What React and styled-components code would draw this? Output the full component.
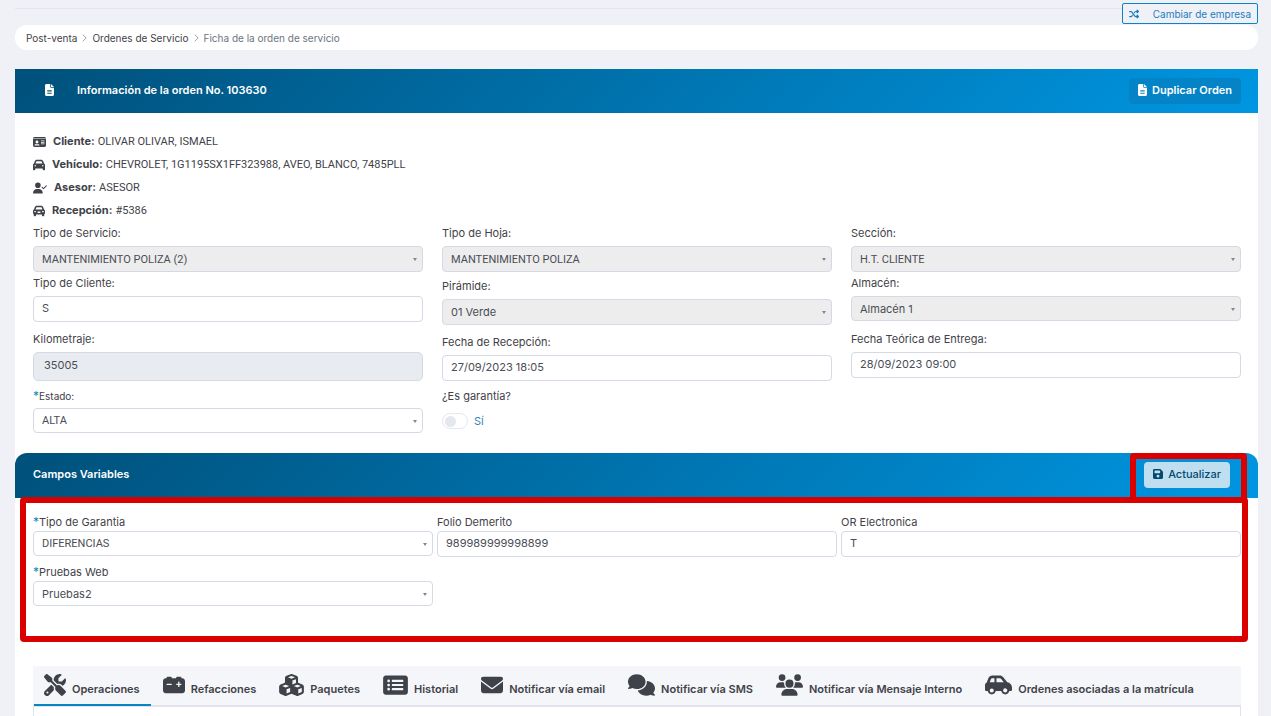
import React from "react";
import styled, { createGlobalStyle, css } from "styled-components";
import {
  FaShuffle,
  FaFileLines,
  FaIdCard,
  FaCar,
  FaUserCheck,
  FaCarRear,
  FaFloppyDisk,
  FaScrewdriverWrench,
  FaCarBattery,
  FaCubes,
  FaRectangleList,
  FaEnvelope,
  FaComments,
  FaUsers,
  FaCarSide,
} from "react-icons/fa6";

const GlobalStyle = createGlobalStyle`
  * { box-sizing: border-box; }
  body {
    margin: 0;
    background: #f0f1f6;
    color: #3f4249;
    font-family: Inter, "Open Sans", sans-serif;
    font-size: 11px;
    line-height: 18px;
  }
  button, input, select { font: inherit; color: inherit; margin: 0; }
  button { cursor: pointer; }
  svg { display: block; flex: none; }
`;

const Glyph = styled.span`
  flex: none;
  svg {
    width: ${(p) => p.$width}px;
    height: ${(p) => p.$height}px;
  }
`;

const Page = styled.div`
  min-height: 100vh;
  display: flex;
  flex-direction: column;
  padding: 0 13px 0 15px;
`;

const TopBar = styled.header`
  display: flex;
  justify-content: flex-end;
  height: 25px;
  padding-top: 3px;
  background: linear-gradient(#e3e5ec, #e3e5ec) 0 8px / 100% 1px no-repeat;
`;

const CompanyButton = styled.button`
  display: flex;
  align-items: center;
  gap: 14px;
  height: 21px;
  padding: 0 6px;
  border: 1px solid #0a84c8;
  border-radius: 2px;
  background: #f0f1f6;
  color: #1a7dbd;
  font-size: 10px;
`;

const Breadcrumb = styled.nav`
  display: flex;
  align-items: center;
  gap: 5px;
  height: 25px;
  padding: 0 11px;
  border-radius: 12px;
  background: #fff;
  font-size: 10px;
  color: #6c7480;
`;

const Crumb = styled.a`
  color: #3f4249;
  text-decoration: none;
`;

const Chevron = styled.svg`
  width: 5px;
  height: 8px;
  fill: none;
  stroke: #a0a4ad;
`;

const Card = styled.main`
  flex: 1;
  display: flex;
  flex-direction: column;
  margin-top: 19px;
  background: #fff;
`;

const SectionHeader = styled.div`
  display: flex;
  align-items: center;
  justify-content: space-between;
  height: ${(p) => (p.$rounded ? 45 : 44)}px;
  padding: 0 ${(p) => (p.$rounded ? 28 : 17)}px ${(p) => (p.$rounded ? 2 : 0)}px 18px;
  border-radius: ${(p) => (p.$rounded ? "12px 12px 0 0" : "0")};
  background: linear-gradient(135deg, #00507a 0%, #0096e2 100%);
  color: #fff;
`;

const Title = styled.h2`
  display: flex;
  align-items: center;
  gap: 23px;
  margin: 0;
  padding: 0 0 2px ${(p) => (p.$indent ? 12 : 0)}px;
  font-size: 11px;
  font-weight: 600;
`;

const HeaderButton = styled.button`
  display: flex;
  align-items: center;
  gap: 5px;
  height: 26px;
  padding: 0 9px 2px;
  border: 0;
  border-radius: 4px;
  background: ${(p) => (p.$light ? "#bfdff1" : "#0483c6")};
  color: ${(p) => (p.$light ? "#06496f" : "#fff")};
  font-weight: ${(p) => (p.$light ? 500 : 600)};
`;

const OrderBody = styled.section`
  padding: 17px 17px 20px 18px;
`;

const Facts = styled.ul`
  list-style: none;
  margin: 0 0 2px;
  padding: 0;
`;

const Fact = styled.li`
  display: flex;
  align-items: center;
  height: 23px;
  gap: 7px;
`;

const FactValue = styled.span`
  font-family: Roboto, sans-serif;
`;

const Columns = styled.div`
  display: grid;
  grid-template-columns: repeat(3, 1fr);
  column-gap: ${(p) => p.$gap}px;
  align-items: start;
`;

const Field = styled.div`
  display: flex;
  flex-direction: column;
  margin-top: ${(p) => p.$top || 0}px;
`;

const Label = styled.label`
  height: ${(p) => (p.$small ? 17 : 18)}px;
  margin-bottom: ${(p) => (p.$tight ? 0 : 4)}px;
  font-size: ${(p) => (p.$small ? 10 : 11)}px;
`;

const Required = styled.span`
  color: #0a84c8;
  font-size: 12px;
`;

const control = css`
  width: 100%;
  border: 1px solid #d6d9e5;
  border-radius: 4px;
  background: #fff;
  color: #4a4d55;
  opacity: 1;
  outline: none;
`;

const Input = styled.input`
  ${control}
  height: 26px;
  padding: 0 8px 2px;
  &:disabled {
    height: 29px;
    padding: 0 10px 3px;
    border-radius: 5px;
    background: #e8ebef;
  }
`;

const SelectBox = styled.span`
  position: relative;
  display: block;
  &::after {
    content: "";
    position: absolute;
    right: 6px;
    top: 12px;
    border: solid transparent;
    border-width: 3px 2px 0;
    border-top-color: #84868c;
    pointer-events: none;
  }
`;

const SelectControl = styled.select`
  ${control}
  appearance: none;
  height: ${(p) => (p.$short ? 25 : 26)}px;
  padding: ${(p) => (p.$caps && !p.$short ? 1 : 0)}px 20px 0 8px;
  font-family: ${(p) => (p.$caps ? "Roboto" : "Inter")}, sans-serif;
  &:disabled { background: #ededee; }
`;

const Switch = styled.label`
  display: flex;
  align-items: center;
  gap: 6px;
  height: 16px;
  margin-top: 4px;
  color: #3b82bd;
`;

const SwitchInput = styled.input`
  appearance: none;
  display: flex;
  align-items: center;
  width: 26px;
  height: 16px;
  margin: 0;
  padding: 0 2px;
  border: 1px solid #e4e7ee;
  border-radius: 8px;
  background: #fff;
  &::before {
    content: "";
    width: 11px;
    height: 11px;
    border-radius: 50%;
    background: #e4e7ee;
  }
`;

const VariableSection = styled.section`
  position: relative;
`;

const VariableBody = styled.div`
  display: flex;
  flex-direction: column;
  gap: 6px;
  min-height: 168px;
  padding: 15px 17px 0 18px;
`;

const Highlight = styled.div`
  position: absolute;
  border: 6px solid #da0000;
  border-radius: 4px;
  pointer-events: none;
`;

const FieldsHighlight = styled(Highlight)`
  top: 44px;
  left: 5px;
  right: 10px;
  height: 145px;
`;

const ButtonHighlight = styled(Highlight)`
  top: 0;
  right: 11px;
  width: 117px;
  height: 50px;
`;

const TabSection = styled.section`
  flex: 1;
  display: flex;
  flex-direction: column;
  margin: 0 17px 0 18px;
`;

const TabList = styled.div`
  display: flex;
  height: 41px;
  padding-left: 1px;
  background: #f5f6f9;
  border-bottom: 2px solid #e1e3ec;
`;

const Tab = styled.button`
  display: flex;
  align-items: center;
  gap: 6px;
  height: 40px;
  padding: 0 11px 0 ${(p) => (p.$active ? 10 : 12)}px;
  border: 0;
  border-bottom: 2px solid ${(p) => (p.$active ? "#0a84c0" : "transparent")};
  background: none;
  font-weight: 600;
  white-space: nowrap;
`;

const TabText = styled.span`
  padding-top: 8px;
`;

const TabPanel = styled.div`
  flex: 1;
  border: solid #e1e3ec;
  border-width: 0 1px;
`;

function TextField({ id, label, value, top, tight, disabled }) {
  return (
    <Field $top={top}>
      <Label htmlFor={id} $tight={tight}>{label}</Label>
      <Input id={id} defaultValue={value} disabled={disabled} />
    </Field>
  );
}

function SelectField({ id, label, value, top, tight, small, short, required, disabled }) {
  return (
    <Field $top={top}>
      <Label htmlFor={id} $tight={tight} $small={small}>
        {required && <Required>*</Required>}
        {label}
      </Label>
      <SelectBox>
        <SelectControl
          id={id}
          disabled={disabled}
          $short={short}
          $caps={value === value.toUpperCase()}
          defaultValue={value}
        >
          <option>{value}</option>
        </SelectControl>
      </SelectBox>
    </Field>
  );
}

const facts = [
  { Icon: FaIdCard, width: 13, name: "Cliente:", value: "OLIVAR OLIVAR, ISMAEL" },
  { Icon: FaCar, width: 12, name: "Vehículo:", value: "CHEVROLET, 1G1195SX1FF323988, AVEO, BLANCO, 7485PLL" },
  { Icon: FaUserCheck, width: 14, name: "Asesor:", value: "ASESOR" },
  { Icon: FaCarRear, width: 12, name: "Recepción:", value: "#5386" },
];

const tabs = [
  { Icon: FaScrewdriverWrench, width: 22, text: "Operaciones" },
  { Icon: FaCarBattery, width: 22, text: "Refacciones" },
  { Icon: FaCubes, width: 25, text: "Paquetes" },
  { Icon: FaRectangleList, width: 25, text: "Historial" },
  { Icon: FaEnvelope, width: 22, text: "Notificar vía email" },
  { Icon: FaComments, width: 27, text: "Notificar vía SMS" },
  { Icon: FaUsers, width: 27, text: "Notificar vía Mensaje Interno" },
  { Icon: FaCarSide, width: 27, text: "Ordenes asociadas a la matrícula" },
];

const Separator = () => (
  <Chevron viewBox="0 0 5 8" aria-hidden="true">
    <path d="M.8.8 4.200 4 .8 7.200" />
  </Chevron>
);

export default function App() {
  return (
    <>
      <GlobalStyle />
      <Page>
        <TopBar>
          <CompanyButton type="button">
            <FaShuffle size={10} />
            Cambiar de empresa
          </CompanyButton>
        </TopBar>
        <Breadcrumb>
          <Crumb href="#post-venta">Post-venta</Crumb>
          <Separator />
          <Crumb href="#ordenes">Ordenes de Servicio</Crumb>
          <Separator />
          <span>Ficha de la orden de servicio</span>
        </Breadcrumb>
        <Card>
          <SectionHeader>
            <Title $indent>
              <Glyph $width={9} $height={12}>
                <FaFileLines />
              </Glyph>
              Información de la orden No. 103630
            </Title>
            <HeaderButton type="button">
              <Glyph $width={9} $height={12}>
                <FaFileLines />
              </Glyph>
              Duplicar Orden
            </HeaderButton>
          </SectionHeader>
          <OrderBody>
            <Facts>
              {facts.map(({ Icon, width, name, value }) => (
                <Fact key={name}>
                  <Glyph $width={width} $height={12}>
                    <Icon />
                  </Glyph>
                  <span>
                    <b>{name}</b> <FactValue>{value}</FactValue>
                  </span>
                </Fact>
              ))}
            </Facts>
            <Columns $gap={19}>
              <div>
                <SelectField id="servicio" label="Tipo de Servicio:" value="MANTENIMIENTO POLIZA (2)" disabled />
                <TextField id="cliente" label="Tipo de Cliente:" value="S" top={2} />
                <TextField id="km" label="Kilometraje:" value="35005" top={8} disabled />
                <SelectField id="estado" label="Estado:" value="ALTA" top={6} required small short />
              </div>
              <div>
                <SelectField id="hoja" label="Tipo de Hoja:" value="MANTENIMIENTO POLIZA" disabled />
                <SelectField id="piramide" label="Pirámide:" value="01 Verde" top={5} disabled />
                <TextField id="recepcion" label="Fecha de Recepción:" value="27/09/2023 18:05" top={8} />
                <Field $top={6}>
                  <Label as="span">¿Es garantía?</Label>
                  <Switch>
                    <SwitchInput type="checkbox" role="switch" />
                    Sí
                  </Switch>
                </Field>
              </div>
              <div>
                <SelectField id="seccion" label="Sección:" value="H.T. CLIENTE" disabled />
                <SelectField id="almacen" label="Almacén:" value="Almacén 1" top={2} disabled short />
                <TextField id="entrega" label="Fecha Teórica de Entrega:" value="28/09/2023 09:00" top={9} />
              </div>
            </Columns>
          </OrderBody>
          <VariableSection>
            <SectionHeader $rounded>
              <Title>Campos Variables</Title>
              <HeaderButton type="button" $light>
                <Glyph $width={10} $height={12}>
                  <FaFloppyDisk />
                </Glyph>
                Actualizar
              </HeaderButton>
            </SectionHeader>
            <VariableBody>
              <Columns $gap={4}>
                <SelectField id="garantia" label="Tipo de Garantia" value="DIFERENCIAS" required tight short />
                <TextField id="folio" label="Folio Demerito" value="989989999998899" tight />
                <TextField id="electronica" label="OR Electronica" value="T" tight />
              </Columns>
              <Columns $gap={4}>
                <SelectField id="pruebas" label="Pruebas Web" value="Pruebas2" required tight short />
              </Columns>
            </VariableBody>
            <ButtonHighlight />
            <FieldsHighlight />
          </VariableSection>
          <TabSection>
            <TabList role="tablist">
              {tabs.map(({ Icon, width, text }, i) => (
                <Tab key={text} type="button" role="tab" aria-selected={i === 0} $active={i === 0}>
                  <Glyph $width={width} $height={22}>
                    <Icon />
                  </Glyph>
                  <TabText>{text}</TabText>
                </Tab>
              ))}
            </TabList>
            <TabPanel role="tabpanel" />
          </TabSection>
        </Card>
      </Page>
    </>
  );
}
